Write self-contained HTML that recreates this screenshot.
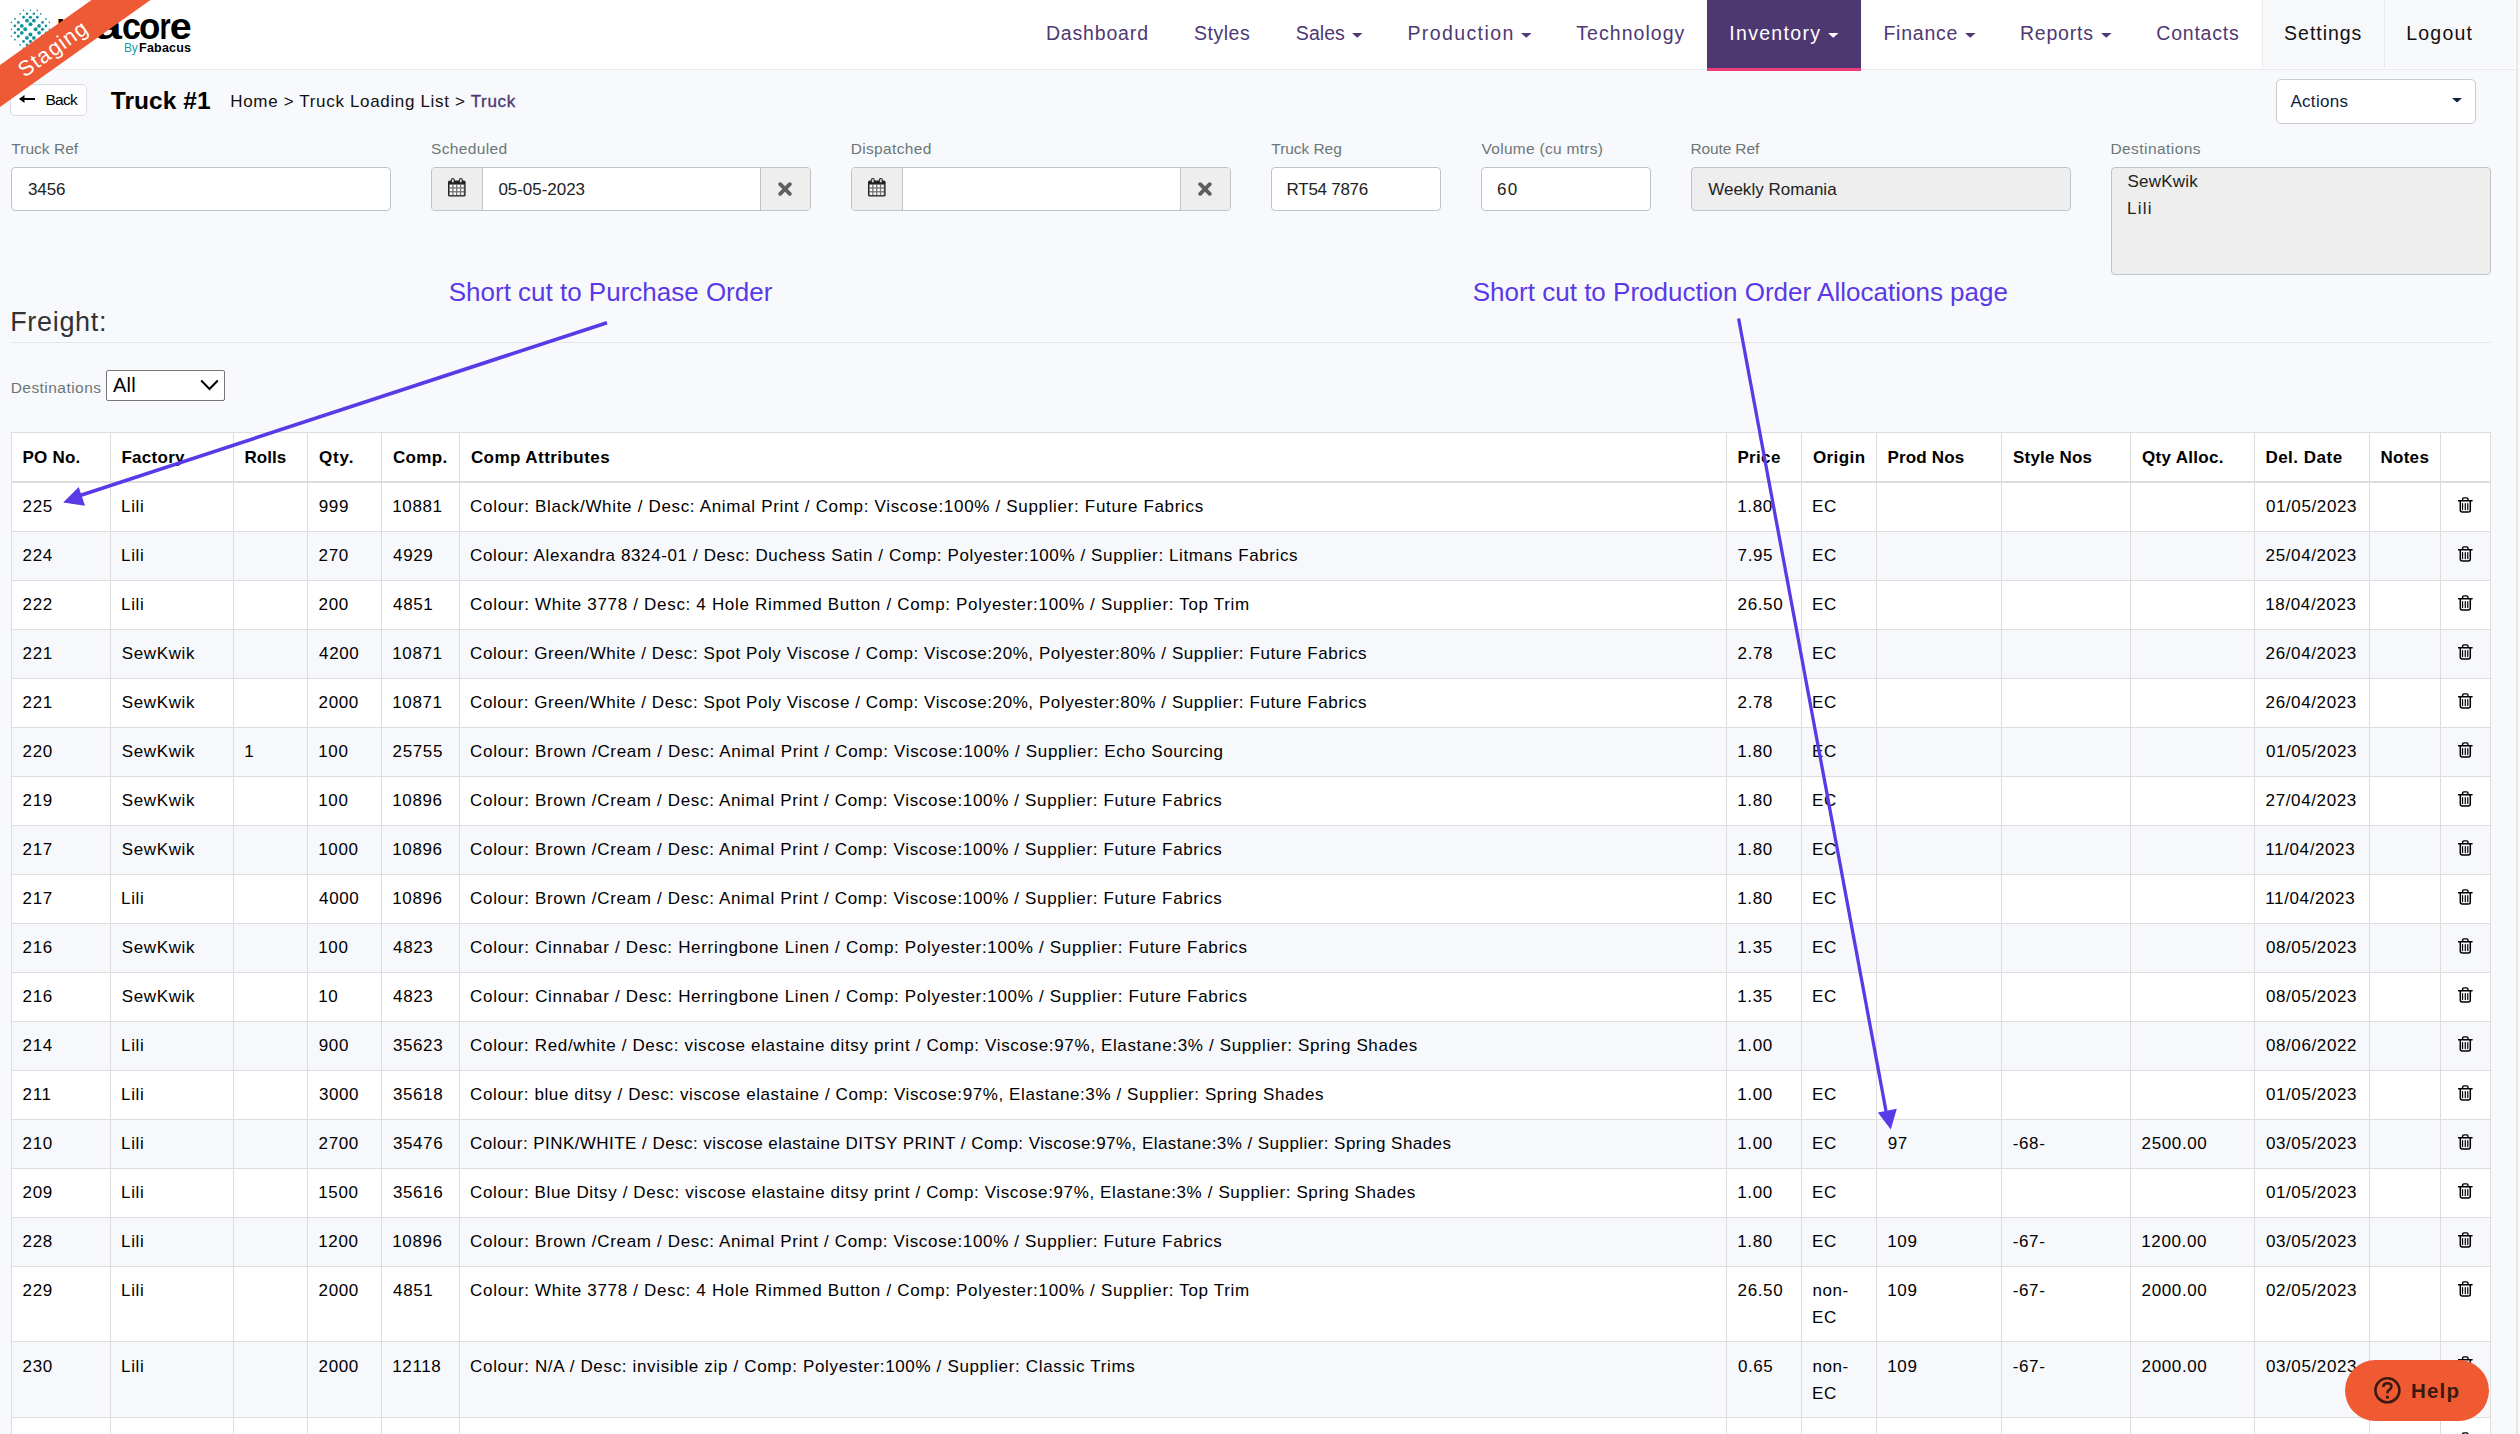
<!DOCTYPE html>
<html><head><meta charset="utf-8"><title>Truck #1</title>
<style>
html,body{margin:0;padding:0;}
body{width:2520px;height:1434px;overflow:hidden;position:relative;background:#f8f9fc;font-family:"Liberation Sans",sans-serif;}
.t{position:absolute;white-space:nowrap;}
.r{position:absolute;}
</style></head><body>
<div class="r" style="left:0px;top:0px;width:2516px;height:69px;background:#ffffff;"></div>
<div class="r" style="left:0px;top:69px;width:2516px;height:1px;background:#e9eaec;"></div>
<div class="r" style="left:2262px;top:0px;width:253px;height:68px;background:#f7f8fa;"></div>
<div class="r" style="left:2262px;top:0px;width:1px;height:68px;background:#ebecef;"></div>
<div class="r" style="left:2384px;top:0px;width:1px;height:68px;background:#e8e9ec;"></div>
<div class="r" style="left:1707px;top:0px;width:154px;height:68px;background:#4e3872;"></div>
<div class="r" style="left:1707px;top:68px;width:154px;height:3px;background:#ef3d7a;"></div>
<div class="t" style="left:1045.88px;top:21.24px;font-size:19.5px;line-height:24px;color:#4e3872;letter-spacing:0.838px;">Dashboard</div>
<div class="t" style="left:1194.12px;top:21.24px;font-size:19.5px;line-height:24px;color:#4e3872;letter-spacing:0.500px;">Styles</div>
<div class="t" style="left:1295.83px;top:21.24px;font-size:19.5px;line-height:24px;color:#4e3872;letter-spacing:0.044px;">Sales</div>
<svg class="r" style="left:1352px;top:33.3px" width="10.5" height="4.8" viewBox="0 0 10.5 4.8"><path d="M0 0H10.5L5.25 4.8Z" fill="#4e3872"/></svg>
<div class="t" style="left:1407.38px;top:21.24px;font-size:19.5px;line-height:24px;color:#4e3872;letter-spacing:1.403px;">Production</div>
<svg class="r" style="left:1521px;top:33.3px" width="10.5" height="4.8" viewBox="0 0 10.5 4.8"><path d="M0 0H10.5L5.25 4.8Z" fill="#4e3872"/></svg>
<div class="t" style="left:1576.33px;top:21.24px;font-size:19.5px;line-height:24px;color:#4e3872;letter-spacing:1.039px;">Technology</div>
<div class="t" style="left:1883.38px;top:21.24px;font-size:19.5px;line-height:24px;color:#4e3872;letter-spacing:0.771px;">Finance</div>
<svg class="r" style="left:1965px;top:33.3px" width="10.5" height="4.8" viewBox="0 0 10.5 4.8"><path d="M0 0H10.5L5.25 4.8Z" fill="#4e3872"/></svg>
<div class="t" style="left:2019.97px;top:21.24px;font-size:19.5px;line-height:24px;color:#4e3872;letter-spacing:0.787px;">Reports</div>
<svg class="r" style="left:2101px;top:33.3px" width="10.5" height="4.8" viewBox="0 0 10.5 4.8"><path d="M0 0H10.5L5.25 4.8Z" fill="#4e3872"/></svg>
<div class="t" style="left:2156.30px;top:21.24px;font-size:19.5px;line-height:24px;color:#4e3872;letter-spacing:0.779px;">Contacts</div>
<div class="t" style="left:1729.25px;top:21.24px;font-size:19.5px;line-height:24px;color:#ffffff;letter-spacing:1.312px;">Inventory</div>
<svg class="r" style="left:1828px;top:33.3px" width="10.5" height="4.8" viewBox="0 0 10.5 4.8"><path d="M0 0H10.5L5.25 4.8Z" fill="#ffffff"/></svg>
<div class="t" style="left:2284.12px;top:21.24px;font-size:19.5px;line-height:24px;color:#111;letter-spacing:0.961px;">Settings</div>
<div class="t" style="left:2406.18px;top:21.24px;font-size:19.5px;line-height:24px;color:#111;letter-spacing:1.225px;">Logout</div>
<div class="r" style="left:2516px;top:0px;width:4px;height:1434px;background:#fafafa;"></div>
<div class="r" style="left:2516px;top:0px;width:2px;height:1434px;background:#e8e8e8;"></div>
<div class="r" style="left:10px;top:84px;width:77px;height:32px;background:#ffffff;border:1px solid #d9dce1;border-radius:5px;box-sizing:border-box;"></div>
<svg class="r" style="left:18.8px;top:94.8px" width="16" height="8" viewBox="0 0 16 8"><path d="M16 4H3.5" stroke="#000" stroke-width="2"/><path d="M0 4L5.5 0V8Z" fill="#000"/></svg>
<div class="t" style="left:45.45px;top:90.13px;font-size:15.5px;line-height:19px;color:#000;letter-spacing:-0.717px;">Back</div>
<div class="t" style="left:110.75px;top:84.91px;font-size:24.5px;line-height:31px;color:#000;font-weight:bold;letter-spacing:0.071px;">Truck #1</div>
<div class="t" style="left:230.32px;top:91.01px;font-size:17px;line-height:21px;color:#111;letter-spacing:0.664px;">Home &gt; Truck Loading List &gt; <span style="color:#4e3872;-webkit-text-stroke:0.35px #4e3872">Truck</span></div>
<div class="r" style="left:2276px;top:79px;width:200px;height:45px;background:#ffffff;border:1px solid #c9cbce;border-radius:5px;box-sizing:border-box;"></div>
<div class="t" style="left:2290.40px;top:90.51px;font-size:17px;line-height:21px;color:#10223f;letter-spacing:0.312px;">Actions</div>
<svg class="r" style="left:2452px;top:98.3px" width="10" height="4.6" viewBox="0 0 10 4.6"><path d="M0 0H10L5.0 4.6Z" fill="#10223f"/></svg>
<div class="t" style="left:11.32px;top:139.13px;font-size:15.5px;line-height:19px;color:#6b7776;letter-spacing:0.031px;">Truck Ref</div>
<div class="t" style="left:430.95px;top:139.13px;font-size:15.5px;line-height:19px;color:#6b7776;letter-spacing:0.363px;">Scheduled</div>
<div class="t" style="left:850.65px;top:139.13px;font-size:15.5px;line-height:19px;color:#6b7776;letter-spacing:0.361px;">Dispatched</div>
<div class="t" style="left:1271.33px;top:139.13px;font-size:15.5px;line-height:19px;color:#6b7776;letter-spacing:-0.062px;">Truck Reg</div>
<div class="t" style="left:1481.47px;top:139.13px;font-size:15.5px;line-height:19px;color:#6b7776;letter-spacing:0.292px;">Volume (cu mtrs)</div>
<div class="t" style="left:1690.45px;top:139.13px;font-size:15.5px;line-height:19px;color:#6b7776;letter-spacing:-0.128px;">Route Ref</div>
<div class="t" style="left:2110.45px;top:139.13px;font-size:15.5px;line-height:19px;color:#6b7776;letter-spacing:0.436px;">Destinations</div>
<div class="r" style="left:11px;top:167px;width:380px;height:44px;background:#fff;border:1px solid #bcc5c8;border-radius:4px;box-sizing:border-box;"></div>
<div class="t" style="left:28.07px;top:178.91px;font-size:17px;line-height:21px;color:#222;letter-spacing:-0.167px;">3456</div>
<div class="r" style="left:431px;top:167px;width:380px;height:44px;background:#fff;border:1px solid #bcc5c8;border-radius:4px;box-sizing:border-box;"></div>
<div class="r" style="left:432px;top:168px;width:50px;height:42px;background:#eeeeee;border-radius:3px 0 0 3px;"></div>
<div class="r" style="left:482px;top:168px;width:1px;height:42px;background:#bcc5c8;"></div>
<div class="r" style="left:761px;top:168px;width:49px;height:42px;background:#eeeeee;border-radius:0 3px 3px 0;"></div>
<div class="r" style="left:760px;top:168px;width:1px;height:42px;background:#bcc5c8;"></div>
<svg class="r" style="left:448px;top:178px" width="18" height="19" viewBox="0 0 18 19"><rect x="0" y="2.6" width="17.6" height="16" rx="1.7" fill="#222"/><rect x="1.2" y="6.2" width="15.2" height="11.2" fill="#777"/><rect x="2.8" y="0" width="4" height="5.2" rx="2" fill="#222"/><rect x="3.8" y="0.9" width="2" height="3.6" rx="1" fill="#ccc"/><rect x="10.8" y="0" width="4" height="5.2" rx="2" fill="#222"/><rect x="11.8" y="0.9" width="2" height="3.6" rx="1" fill="#ccc"/><rect x="1.74" y="6.80" width="2.44" height="2.44" fill="#fff"/><rect x="5.57" y="6.80" width="2.44" height="2.44" fill="#fff"/><rect x="9.40" y="6.80" width="2.44" height="2.44" fill="#fff"/><rect x="13.23" y="6.80" width="2.44" height="2.44" fill="#fff"/><rect x="1.74" y="10.63" width="2.44" height="2.44" fill="#fff"/><rect x="5.57" y="10.63" width="2.44" height="2.44" fill="#fff"/><rect x="9.40" y="10.63" width="2.44" height="2.44" fill="#fff"/><rect x="13.23" y="10.63" width="2.44" height="2.44" fill="#fff"/><rect x="1.74" y="14.46" width="2.44" height="2.44" fill="#fff"/><rect x="5.57" y="14.46" width="2.44" height="2.44" fill="#fff"/><rect x="9.40" y="14.46" width="2.44" height="2.44" fill="#fff"/><rect x="13.23" y="14.46" width="2.44" height="2.44" fill="#fff"/></svg>
<svg class="r" style="left:778px;top:182px" width="14" height="14" viewBox="0 0 14 14"><path d="M2.2 2.2L11.8 11.8M11.8 2.2L2.2 11.8" stroke="#5f5f5f" stroke-width="3.8" stroke-linecap="round"/></svg>
<div class="t" style="left:498.38px;top:178.91px;font-size:17px;line-height:21px;color:#222;letter-spacing:-0.036px;">05-05-2023</div>
<div class="r" style="left:851px;top:167px;width:380px;height:44px;background:#fff;border:1px solid #bcc5c8;border-radius:4px;box-sizing:border-box;"></div>
<div class="r" style="left:852px;top:168px;width:50px;height:42px;background:#eeeeee;border-radius:3px 0 0 3px;"></div>
<div class="r" style="left:902px;top:168px;width:1px;height:42px;background:#bcc5c8;"></div>
<div class="r" style="left:1181px;top:168px;width:49px;height:42px;background:#eeeeee;border-radius:0 3px 3px 0;"></div>
<div class="r" style="left:1180px;top:168px;width:1px;height:42px;background:#bcc5c8;"></div>
<svg class="r" style="left:868px;top:178px" width="18" height="19" viewBox="0 0 18 19"><rect x="0" y="2.6" width="17.6" height="16" rx="1.7" fill="#222"/><rect x="1.2" y="6.2" width="15.2" height="11.2" fill="#777"/><rect x="2.8" y="0" width="4" height="5.2" rx="2" fill="#222"/><rect x="3.8" y="0.9" width="2" height="3.6" rx="1" fill="#ccc"/><rect x="10.8" y="0" width="4" height="5.2" rx="2" fill="#222"/><rect x="11.8" y="0.9" width="2" height="3.6" rx="1" fill="#ccc"/><rect x="1.74" y="6.80" width="2.44" height="2.44" fill="#fff"/><rect x="5.57" y="6.80" width="2.44" height="2.44" fill="#fff"/><rect x="9.40" y="6.80" width="2.44" height="2.44" fill="#fff"/><rect x="13.23" y="6.80" width="2.44" height="2.44" fill="#fff"/><rect x="1.74" y="10.63" width="2.44" height="2.44" fill="#fff"/><rect x="5.57" y="10.63" width="2.44" height="2.44" fill="#fff"/><rect x="9.40" y="10.63" width="2.44" height="2.44" fill="#fff"/><rect x="13.23" y="10.63" width="2.44" height="2.44" fill="#fff"/><rect x="1.74" y="14.46" width="2.44" height="2.44" fill="#fff"/><rect x="5.57" y="14.46" width="2.44" height="2.44" fill="#fff"/><rect x="9.40" y="14.46" width="2.44" height="2.44" fill="#fff"/><rect x="13.23" y="14.46" width="2.44" height="2.44" fill="#fff"/></svg>
<svg class="r" style="left:1198px;top:182px" width="14" height="14" viewBox="0 0 14 14"><path d="M2.2 2.2L11.8 11.8M11.8 2.2L2.2 11.8" stroke="#5f5f5f" stroke-width="3.8" stroke-linecap="round"/></svg>
<div class="r" style="left:1271px;top:167px;width:170px;height:44px;background:#fff;border:1px solid #bcc5c8;border-radius:4px;box-sizing:border-box;"></div>
<div class="t" style="left:1286.62px;top:178.91px;font-size:17px;line-height:21px;color:#222;letter-spacing:-0.269px;">RT54 7876</div>
<div class="r" style="left:1481px;top:167px;width:170px;height:44px;background:#fff;border:1px solid #bcc5c8;border-radius:4px;box-sizing:border-box;"></div>
<div class="t" style="left:1497.12px;top:178.91px;font-size:17px;line-height:21px;color:#222;letter-spacing:1.125px;">60</div>
<div class="r" style="left:1691px;top:167px;width:380px;height:44px;background:#eeeeee;border:1px solid #bcc5c8;border-radius:4px;box-sizing:border-box;"></div>
<div class="t" style="left:1708.17px;top:178.91px;font-size:17px;line-height:21px;color:#222;letter-spacing:0.021px;">Weekly Romania</div>
<div class="r" style="left:2111px;top:167px;width:380px;height:108px;background:#eeeeee;border:1px solid #bcc5c8;border-radius:4px;box-sizing:border-box;"></div>
<div class="t" style="left:2127.55px;top:170.91px;font-size:17px;line-height:21px;color:#222;letter-spacing:0.192px;">SewKwik</div>
<div class="t" style="left:2126.93px;top:197.91px;font-size:17px;line-height:21px;color:#222;letter-spacing:1.250px;">Lili</div>
<div class="t" style="left:10.15px;top:304.54px;font-size:27px;line-height:34px;color:#333;letter-spacing:0.693px;">Freight:</div>
<div class="r" style="left:11px;top:342px;width:2480px;height:1px;background:#e4e5e8;"></div>
<div class="t" style="left:10.65px;top:378.03px;font-size:15.5px;line-height:19px;color:#6b7776;letter-spacing:0.464px;">Destinations</div>
<div class="r" style="left:106px;top:370px;width:119px;height:31px;background:#ffffff;border:1px solid #767676;border-radius:2px;box-sizing:border-box;"></div>
<div class="t" style="left:112.90px;top:373.47px;font-size:20px;line-height:25px;color:#000;letter-spacing:0.262px;">All</div>
<svg class="r" style="left:199.5px;top:379px" width="19" height="12" viewBox="0 0 19 12"><path d="M1.2 1.5L9.5 10L17.8 1.5" stroke="#000" stroke-width="2" fill="none"/></svg>
<div class="r" style="left:11px;top:432px;width:2480px;height:51px;background:#ffffff;"></div>
<div class="r" style="left:11px;top:483px;width:2480px;height:49px;background:#ffffff;"></div>
<div class="r" style="left:11px;top:532px;width:2480px;height:49px;background:#f7f8fc;"></div>
<div class="r" style="left:11px;top:581px;width:2480px;height:49px;background:#ffffff;"></div>
<div class="r" style="left:11px;top:630px;width:2480px;height:49px;background:#f7f8fc;"></div>
<div class="r" style="left:11px;top:679px;width:2480px;height:49px;background:#ffffff;"></div>
<div class="r" style="left:11px;top:728px;width:2480px;height:49px;background:#f7f8fc;"></div>
<div class="r" style="left:11px;top:777px;width:2480px;height:49px;background:#ffffff;"></div>
<div class="r" style="left:11px;top:826px;width:2480px;height:49px;background:#f7f8fc;"></div>
<div class="r" style="left:11px;top:875px;width:2480px;height:49px;background:#ffffff;"></div>
<div class="r" style="left:11px;top:924px;width:2480px;height:49px;background:#f7f8fc;"></div>
<div class="r" style="left:11px;top:973px;width:2480px;height:49px;background:#ffffff;"></div>
<div class="r" style="left:11px;top:1022px;width:2480px;height:49px;background:#f7f8fc;"></div>
<div class="r" style="left:11px;top:1071px;width:2480px;height:49px;background:#ffffff;"></div>
<div class="r" style="left:11px;top:1120px;width:2480px;height:49px;background:#f7f8fc;"></div>
<div class="r" style="left:11px;top:1169px;width:2480px;height:49px;background:#ffffff;"></div>
<div class="r" style="left:11px;top:1218px;width:2480px;height:49px;background:#f7f8fc;"></div>
<div class="r" style="left:11px;top:1267px;width:2480px;height:75px;background:#ffffff;"></div>
<div class="r" style="left:11px;top:1342px;width:2480px;height:76px;background:#f7f8fc;"></div>
<div class="r" style="left:11px;top:1418px;width:2480px;height:16px;background:#ffffff;"></div>
<div class="r" style="left:11px;top:432px;width:2480px;height:1px;background:#dddddd;"></div>
<div class="r" style="left:11px;top:481px;width:2480px;height:2px;background:#dddddd;"></div>
<div class="r" style="left:11px;top:531px;width:2480px;height:1px;background:#dddddd;"></div>
<div class="r" style="left:11px;top:580px;width:2480px;height:1px;background:#dddddd;"></div>
<div class="r" style="left:11px;top:629px;width:2480px;height:1px;background:#dddddd;"></div>
<div class="r" style="left:11px;top:678px;width:2480px;height:1px;background:#dddddd;"></div>
<div class="r" style="left:11px;top:727px;width:2480px;height:1px;background:#dddddd;"></div>
<div class="r" style="left:11px;top:776px;width:2480px;height:1px;background:#dddddd;"></div>
<div class="r" style="left:11px;top:825px;width:2480px;height:1px;background:#dddddd;"></div>
<div class="r" style="left:11px;top:874px;width:2480px;height:1px;background:#dddddd;"></div>
<div class="r" style="left:11px;top:923px;width:2480px;height:1px;background:#dddddd;"></div>
<div class="r" style="left:11px;top:972px;width:2480px;height:1px;background:#dddddd;"></div>
<div class="r" style="left:11px;top:1021px;width:2480px;height:1px;background:#dddddd;"></div>
<div class="r" style="left:11px;top:1070px;width:2480px;height:1px;background:#dddddd;"></div>
<div class="r" style="left:11px;top:1119px;width:2480px;height:1px;background:#dddddd;"></div>
<div class="r" style="left:11px;top:1168px;width:2480px;height:1px;background:#dddddd;"></div>
<div class="r" style="left:11px;top:1217px;width:2480px;height:1px;background:#dddddd;"></div>
<div class="r" style="left:11px;top:1266px;width:2480px;height:1px;background:#dddddd;"></div>
<div class="r" style="left:11px;top:1341px;width:2480px;height:1px;background:#dddddd;"></div>
<div class="r" style="left:11px;top:1417px;width:2480px;height:1px;background:#dddddd;"></div>
<div class="r" style="left:11px;top:1466px;width:2480px;height:1px;background:#dddddd;"></div>
<div class="r" style="left:11px;top:432px;width:1px;height:1002px;background:#dddddd;"></div>
<div class="r" style="left:110px;top:432px;width:1px;height:1002px;background:#dddddd;"></div>
<div class="r" style="left:233px;top:432px;width:1px;height:1002px;background:#dddddd;"></div>
<div class="r" style="left:307px;top:432px;width:1px;height:1002px;background:#dddddd;"></div>
<div class="r" style="left:381px;top:432px;width:1px;height:1002px;background:#dddddd;"></div>
<div class="r" style="left:459px;top:432px;width:1px;height:1002px;background:#dddddd;"></div>
<div class="r" style="left:1726px;top:432px;width:1px;height:1002px;background:#dddddd;"></div>
<div class="r" style="left:1801px;top:432px;width:1px;height:1002px;background:#dddddd;"></div>
<div class="r" style="left:1876px;top:432px;width:1px;height:1002px;background:#dddddd;"></div>
<div class="r" style="left:2001px;top:432px;width:1px;height:1002px;background:#dddddd;"></div>
<div class="r" style="left:2130px;top:432px;width:1px;height:1002px;background:#dddddd;"></div>
<div class="r" style="left:2254px;top:432px;width:1px;height:1002px;background:#dddddd;"></div>
<div class="r" style="left:2369px;top:432px;width:1px;height:1002px;background:#dddddd;"></div>
<div class="r" style="left:2440px;top:432px;width:1px;height:1002px;background:#dddddd;"></div>
<div class="r" style="left:2490px;top:432px;width:1px;height:1002px;background:#dddddd;"></div>
<div class="t" style="left:22.38px;top:446.61px;font-size:17px;line-height:21px;color:#000;font-weight:bold;letter-spacing:0.240px;">PO No.</div>
<div class="t" style="left:121.38px;top:446.61px;font-size:17px;line-height:21px;color:#000;font-weight:bold;letter-spacing:0.292px;">Factory</div>
<div class="t" style="left:244.38px;top:446.61px;font-size:17px;line-height:21px;color:#000;font-weight:bold;letter-spacing:0.062px;">Rolls</div>
<div class="t" style="left:318.88px;top:446.61px;font-size:17px;line-height:21px;color:#000;font-weight:bold;letter-spacing:0.892px;">Qty.</div>
<div class="t" style="left:392.88px;top:446.61px;font-size:17px;line-height:21px;color:#000;font-weight:bold;letter-spacing:0.344px;">Comp.</div>
<div class="t" style="left:470.88px;top:446.61px;font-size:17px;line-height:21px;color:#000;font-weight:bold;letter-spacing:0.446px;">Comp Attributes</div>
<div class="t" style="left:1737.38px;top:446.61px;font-size:17px;line-height:21px;color:#000;font-weight:bold;letter-spacing:0.356px;">Price</div>
<div class="t" style="left:1812.88px;top:446.61px;font-size:17px;line-height:21px;color:#000;font-weight:bold;letter-spacing:0.425px;">Origin</div>
<div class="t" style="left:1887.38px;top:446.61px;font-size:17px;line-height:21px;color:#000;font-weight:bold;letter-spacing:0.179px;">Prod Nos</div>
<div class="t" style="left:2013.00px;top:446.61px;font-size:17px;line-height:21px;color:#000;font-weight:bold;letter-spacing:0.194px;">Style Nos</div>
<div class="t" style="left:2141.88px;top:446.61px;font-size:17px;line-height:21px;color:#000;font-weight:bold;letter-spacing:0.333px;">Qty Alloc.</div>
<div class="t" style="left:2265.38px;top:446.61px;font-size:17px;line-height:21px;color:#000;font-weight:bold;letter-spacing:0.500px;">Del. Date</div>
<div class="t" style="left:2380.38px;top:446.61px;font-size:17px;line-height:21px;color:#000;font-weight:bold;letter-spacing:0.306px;">Notes</div>
<div class="t" style="left:22.62px;top:495.91px;font-size:17px;line-height:21px;color:#000;letter-spacing:0.620px;">225</div>
<div class="t" style="left:121.12px;top:495.91px;font-size:17px;line-height:21px;color:#000;letter-spacing:0.620px;">Lili</div>
<div class="t" style="left:318.75px;top:495.91px;font-size:17px;line-height:21px;color:#000;letter-spacing:0.620px;">999</div>
<div class="t" style="left:392.25px;top:495.91px;font-size:17px;line-height:21px;color:#000;letter-spacing:0.620px;">10881</div>
<div class="t" style="left:470.12px;top:495.91px;font-size:17px;line-height:21px;color:#000;letter-spacing:0.676px;">Colour: Black/White / Desc: Animal Print / Comp: Viscose:100% / Supplier: Future Fabrics</div>
<div class="t" style="left:1737.25px;top:495.91px;font-size:17px;line-height:21px;color:#000;letter-spacing:0.620px;">1.80</div>
<div class="t" style="left:1812.12px;top:495.91px;font-size:17px;line-height:21px;color:#000;letter-spacing:0.620px;">EC</div>
<div class="t" style="left:2265.88px;top:495.91px;font-size:17px;line-height:21px;color:#000;letter-spacing:0.620px;">01/05/2023</div>
<svg class="r" style="left:2457.8px;top:497px" width="15" height="17" viewBox="0 0 15 17"><path d="M0.6 3.7H14" stroke="#000" stroke-width="1.6" stroke-linecap="round"/><path d="M4.6 3.4V2.2Q4.6 0.9 5.9 0.9H8.7Q10 0.9 10 2.2V3.4" stroke="#000" stroke-width="1.4" fill="none"/><path d="M2.3 4V13Q2.3 15.05 4.3 15.05H10.3Q12.3 15.05 12.3 13V4" stroke="#000" stroke-width="1.5" fill="none"/><path d="M4.56 6.5V12.6M7.28 6.5V12.6M9.8 6.5V12.6" stroke="#000" stroke-width="1.2" stroke-linecap="round"/></svg>
<div class="t" style="left:22.62px;top:544.91px;font-size:17px;line-height:21px;color:#000;letter-spacing:0.620px;">224</div>
<div class="t" style="left:121.12px;top:544.91px;font-size:17px;line-height:21px;color:#000;letter-spacing:0.620px;">Lili</div>
<div class="t" style="left:318.62px;top:544.91px;font-size:17px;line-height:21px;color:#000;letter-spacing:0.620px;">270</div>
<div class="t" style="left:393.12px;top:544.91px;font-size:17px;line-height:21px;color:#000;letter-spacing:0.620px;">4929</div>
<div class="t" style="left:470.12px;top:544.91px;font-size:17px;line-height:21px;color:#000;letter-spacing:0.611px;">Colour: Alexandra 8324-01 / Desc: Duchess Satin / Comp: Polyester:100% / Supplier: Litmans Fabrics</div>
<div class="t" style="left:1737.62px;top:544.91px;font-size:17px;line-height:21px;color:#000;letter-spacing:0.620px;">7.95</div>
<div class="t" style="left:1812.12px;top:544.91px;font-size:17px;line-height:21px;color:#000;letter-spacing:0.620px;">EC</div>
<div class="t" style="left:2265.62px;top:544.91px;font-size:17px;line-height:21px;color:#000;letter-spacing:0.620px;">25/04/2023</div>
<svg class="r" style="left:2457.8px;top:546px" width="15" height="17" viewBox="0 0 15 17"><path d="M0.6 3.7H14" stroke="#000" stroke-width="1.6" stroke-linecap="round"/><path d="M4.6 3.4V2.2Q4.6 0.9 5.9 0.9H8.7Q10 0.9 10 2.2V3.4" stroke="#000" stroke-width="1.4" fill="none"/><path d="M2.3 4V13Q2.3 15.05 4.3 15.05H10.3Q12.3 15.05 12.3 13V4" stroke="#000" stroke-width="1.5" fill="none"/><path d="M4.56 6.5V12.6M7.28 6.5V12.6M9.8 6.5V12.6" stroke="#000" stroke-width="1.2" stroke-linecap="round"/></svg>
<div class="t" style="left:22.62px;top:593.91px;font-size:17px;line-height:21px;color:#000;letter-spacing:0.620px;">222</div>
<div class="t" style="left:121.12px;top:593.91px;font-size:17px;line-height:21px;color:#000;letter-spacing:0.620px;">Lili</div>
<div class="t" style="left:318.62px;top:593.91px;font-size:17px;line-height:21px;color:#000;letter-spacing:0.620px;">200</div>
<div class="t" style="left:393.12px;top:593.91px;font-size:17px;line-height:21px;color:#000;letter-spacing:0.620px;">4851</div>
<div class="t" style="left:470.12px;top:593.91px;font-size:17px;line-height:21px;color:#000;letter-spacing:0.681px;">Colour: White 3778 / Desc: 4 Hole Rimmed Button / Comp: Polyester:100% / Supplier: Top Trim</div>
<div class="t" style="left:1737.62px;top:593.91px;font-size:17px;line-height:21px;color:#000;letter-spacing:0.620px;">26.50</div>
<div class="t" style="left:1812.12px;top:593.91px;font-size:17px;line-height:21px;color:#000;letter-spacing:0.620px;">EC</div>
<div class="t" style="left:2265.25px;top:593.91px;font-size:17px;line-height:21px;color:#000;letter-spacing:0.620px;">18/04/2023</div>
<svg class="r" style="left:2457.8px;top:595px" width="15" height="17" viewBox="0 0 15 17"><path d="M0.6 3.7H14" stroke="#000" stroke-width="1.6" stroke-linecap="round"/><path d="M4.6 3.4V2.2Q4.6 0.9 5.9 0.9H8.7Q10 0.9 10 2.2V3.4" stroke="#000" stroke-width="1.4" fill="none"/><path d="M2.3 4V13Q2.3 15.05 4.3 15.05H10.3Q12.3 15.05 12.3 13V4" stroke="#000" stroke-width="1.5" fill="none"/><path d="M4.56 6.5V12.6M7.28 6.5V12.6M9.8 6.5V12.6" stroke="#000" stroke-width="1.2" stroke-linecap="round"/></svg>
<div class="t" style="left:22.62px;top:642.91px;font-size:17px;line-height:21px;color:#000;letter-spacing:0.620px;">221</div>
<div class="t" style="left:121.75px;top:642.91px;font-size:17px;line-height:21px;color:#000;letter-spacing:0.620px;">SewKwik</div>
<div class="t" style="left:319.12px;top:642.91px;font-size:17px;line-height:21px;color:#000;letter-spacing:0.620px;">4200</div>
<div class="t" style="left:392.25px;top:642.91px;font-size:17px;line-height:21px;color:#000;letter-spacing:0.620px;">10871</div>
<div class="t" style="left:470.12px;top:642.91px;font-size:17px;line-height:21px;color:#000;letter-spacing:0.574px;">Colour: Green/White / Desc: Spot Poly Viscose / Comp: Viscose:20%, Polyester:80% / Supplier: Future Fabrics</div>
<div class="t" style="left:1737.62px;top:642.91px;font-size:17px;line-height:21px;color:#000;letter-spacing:0.620px;">2.78</div>
<div class="t" style="left:1812.12px;top:642.91px;font-size:17px;line-height:21px;color:#000;letter-spacing:0.620px;">EC</div>
<div class="t" style="left:2265.62px;top:642.91px;font-size:17px;line-height:21px;color:#000;letter-spacing:0.620px;">26/04/2023</div>
<svg class="r" style="left:2457.8px;top:644px" width="15" height="17" viewBox="0 0 15 17"><path d="M0.6 3.7H14" stroke="#000" stroke-width="1.6" stroke-linecap="round"/><path d="M4.6 3.4V2.2Q4.6 0.9 5.9 0.9H8.7Q10 0.9 10 2.2V3.4" stroke="#000" stroke-width="1.4" fill="none"/><path d="M2.3 4V13Q2.3 15.05 4.3 15.05H10.3Q12.3 15.05 12.3 13V4" stroke="#000" stroke-width="1.5" fill="none"/><path d="M4.56 6.5V12.6M7.28 6.5V12.6M9.8 6.5V12.6" stroke="#000" stroke-width="1.2" stroke-linecap="round"/></svg>
<div class="t" style="left:22.62px;top:691.91px;font-size:17px;line-height:21px;color:#000;letter-spacing:0.620px;">221</div>
<div class="t" style="left:121.75px;top:691.91px;font-size:17px;line-height:21px;color:#000;letter-spacing:0.620px;">SewKwik</div>
<div class="t" style="left:318.62px;top:691.91px;font-size:17px;line-height:21px;color:#000;letter-spacing:0.620px;">2000</div>
<div class="t" style="left:392.25px;top:691.91px;font-size:17px;line-height:21px;color:#000;letter-spacing:0.620px;">10871</div>
<div class="t" style="left:470.12px;top:691.91px;font-size:17px;line-height:21px;color:#000;letter-spacing:0.574px;">Colour: Green/White / Desc: Spot Poly Viscose / Comp: Viscose:20%, Polyester:80% / Supplier: Future Fabrics</div>
<div class="t" style="left:1737.62px;top:691.91px;font-size:17px;line-height:21px;color:#000;letter-spacing:0.620px;">2.78</div>
<div class="t" style="left:1812.12px;top:691.91px;font-size:17px;line-height:21px;color:#000;letter-spacing:0.620px;">EC</div>
<div class="t" style="left:2265.62px;top:691.91px;font-size:17px;line-height:21px;color:#000;letter-spacing:0.620px;">26/04/2023</div>
<svg class="r" style="left:2457.8px;top:693px" width="15" height="17" viewBox="0 0 15 17"><path d="M0.6 3.7H14" stroke="#000" stroke-width="1.6" stroke-linecap="round"/><path d="M4.6 3.4V2.2Q4.6 0.9 5.9 0.9H8.7Q10 0.9 10 2.2V3.4" stroke="#000" stroke-width="1.4" fill="none"/><path d="M2.3 4V13Q2.3 15.05 4.3 15.05H10.3Q12.3 15.05 12.3 13V4" stroke="#000" stroke-width="1.5" fill="none"/><path d="M4.56 6.5V12.6M7.28 6.5V12.6M9.8 6.5V12.6" stroke="#000" stroke-width="1.2" stroke-linecap="round"/></svg>
<div class="t" style="left:22.62px;top:740.91px;font-size:17px;line-height:21px;color:#000;letter-spacing:0.620px;">220</div>
<div class="t" style="left:121.75px;top:740.91px;font-size:17px;line-height:21px;color:#000;letter-spacing:0.620px;">SewKwik</div>
<div class="t" style="left:244.25px;top:740.91px;font-size:17px;line-height:21px;color:#000;letter-spacing:0.620px;">1</div>
<div class="t" style="left:318.25px;top:740.91px;font-size:17px;line-height:21px;color:#000;letter-spacing:0.620px;">100</div>
<div class="t" style="left:392.62px;top:740.91px;font-size:17px;line-height:21px;color:#000;letter-spacing:0.620px;">25755</div>
<div class="t" style="left:470.12px;top:740.91px;font-size:17px;line-height:21px;color:#000;letter-spacing:0.675px;">Colour: Brown /Cream / Desc: Animal Print / Comp: Viscose:100% / Supplier: Echo Sourcing</div>
<div class="t" style="left:1737.25px;top:740.91px;font-size:17px;line-height:21px;color:#000;letter-spacing:0.620px;">1.80</div>
<div class="t" style="left:1812.12px;top:740.91px;font-size:17px;line-height:21px;color:#000;letter-spacing:0.620px;">EC</div>
<div class="t" style="left:2265.88px;top:740.91px;font-size:17px;line-height:21px;color:#000;letter-spacing:0.620px;">01/05/2023</div>
<svg class="r" style="left:2457.8px;top:742px" width="15" height="17" viewBox="0 0 15 17"><path d="M0.6 3.7H14" stroke="#000" stroke-width="1.6" stroke-linecap="round"/><path d="M4.6 3.4V2.2Q4.6 0.9 5.9 0.9H8.7Q10 0.9 10 2.2V3.4" stroke="#000" stroke-width="1.4" fill="none"/><path d="M2.3 4V13Q2.3 15.05 4.3 15.05H10.3Q12.3 15.05 12.3 13V4" stroke="#000" stroke-width="1.5" fill="none"/><path d="M4.56 6.5V12.6M7.28 6.5V12.6M9.8 6.5V12.6" stroke="#000" stroke-width="1.2" stroke-linecap="round"/></svg>
<div class="t" style="left:22.62px;top:789.91px;font-size:17px;line-height:21px;color:#000;letter-spacing:0.620px;">219</div>
<div class="t" style="left:121.75px;top:789.91px;font-size:17px;line-height:21px;color:#000;letter-spacing:0.620px;">SewKwik</div>
<div class="t" style="left:318.25px;top:789.91px;font-size:17px;line-height:21px;color:#000;letter-spacing:0.620px;">100</div>
<div class="t" style="left:392.25px;top:789.91px;font-size:17px;line-height:21px;color:#000;letter-spacing:0.620px;">10896</div>
<div class="t" style="left:470.12px;top:789.91px;font-size:17px;line-height:21px;color:#000;letter-spacing:0.665px;">Colour: Brown /Cream / Desc: Animal Print / Comp: Viscose:100% / Supplier: Future Fabrics</div>
<div class="t" style="left:1737.25px;top:789.91px;font-size:17px;line-height:21px;color:#000;letter-spacing:0.620px;">1.80</div>
<div class="t" style="left:1812.12px;top:789.91px;font-size:17px;line-height:21px;color:#000;letter-spacing:0.620px;">EC</div>
<div class="t" style="left:2265.62px;top:789.91px;font-size:17px;line-height:21px;color:#000;letter-spacing:0.620px;">27/04/2023</div>
<svg class="r" style="left:2457.8px;top:791px" width="15" height="17" viewBox="0 0 15 17"><path d="M0.6 3.7H14" stroke="#000" stroke-width="1.6" stroke-linecap="round"/><path d="M4.6 3.4V2.2Q4.6 0.9 5.9 0.9H8.7Q10 0.9 10 2.2V3.4" stroke="#000" stroke-width="1.4" fill="none"/><path d="M2.3 4V13Q2.3 15.05 4.3 15.05H10.3Q12.3 15.05 12.3 13V4" stroke="#000" stroke-width="1.5" fill="none"/><path d="M4.56 6.5V12.6M7.28 6.5V12.6M9.8 6.5V12.6" stroke="#000" stroke-width="1.2" stroke-linecap="round"/></svg>
<div class="t" style="left:22.62px;top:838.91px;font-size:17px;line-height:21px;color:#000;letter-spacing:0.620px;">217</div>
<div class="t" style="left:121.75px;top:838.91px;font-size:17px;line-height:21px;color:#000;letter-spacing:0.620px;">SewKwik</div>
<div class="t" style="left:318.25px;top:838.91px;font-size:17px;line-height:21px;color:#000;letter-spacing:0.620px;">1000</div>
<div class="t" style="left:392.25px;top:838.91px;font-size:17px;line-height:21px;color:#000;letter-spacing:0.620px;">10896</div>
<div class="t" style="left:470.12px;top:838.91px;font-size:17px;line-height:21px;color:#000;letter-spacing:0.665px;">Colour: Brown /Cream / Desc: Animal Print / Comp: Viscose:100% / Supplier: Future Fabrics</div>
<div class="t" style="left:1737.25px;top:838.91px;font-size:17px;line-height:21px;color:#000;letter-spacing:0.620px;">1.80</div>
<div class="t" style="left:1812.12px;top:838.91px;font-size:17px;line-height:21px;color:#000;letter-spacing:0.620px;">EC</div>
<div class="t" style="left:2265.25px;top:838.91px;font-size:17px;line-height:21px;color:#000;letter-spacing:0.620px;">11/04/2023</div>
<svg class="r" style="left:2457.8px;top:840px" width="15" height="17" viewBox="0 0 15 17"><path d="M0.6 3.7H14" stroke="#000" stroke-width="1.6" stroke-linecap="round"/><path d="M4.6 3.4V2.2Q4.6 0.9 5.9 0.9H8.7Q10 0.9 10 2.2V3.4" stroke="#000" stroke-width="1.4" fill="none"/><path d="M2.3 4V13Q2.3 15.05 4.3 15.05H10.3Q12.3 15.05 12.3 13V4" stroke="#000" stroke-width="1.5" fill="none"/><path d="M4.56 6.5V12.6M7.28 6.5V12.6M9.8 6.5V12.6" stroke="#000" stroke-width="1.2" stroke-linecap="round"/></svg>
<div class="t" style="left:22.62px;top:887.91px;font-size:17px;line-height:21px;color:#000;letter-spacing:0.620px;">217</div>
<div class="t" style="left:121.12px;top:887.91px;font-size:17px;line-height:21px;color:#000;letter-spacing:0.620px;">Lili</div>
<div class="t" style="left:319.12px;top:887.91px;font-size:17px;line-height:21px;color:#000;letter-spacing:0.620px;">4000</div>
<div class="t" style="left:392.25px;top:887.91px;font-size:17px;line-height:21px;color:#000;letter-spacing:0.620px;">10896</div>
<div class="t" style="left:470.12px;top:887.91px;font-size:17px;line-height:21px;color:#000;letter-spacing:0.665px;">Colour: Brown /Cream / Desc: Animal Print / Comp: Viscose:100% / Supplier: Future Fabrics</div>
<div class="t" style="left:1737.25px;top:887.91px;font-size:17px;line-height:21px;color:#000;letter-spacing:0.620px;">1.80</div>
<div class="t" style="left:1812.12px;top:887.91px;font-size:17px;line-height:21px;color:#000;letter-spacing:0.620px;">EC</div>
<div class="t" style="left:2265.25px;top:887.91px;font-size:17px;line-height:21px;color:#000;letter-spacing:0.620px;">11/04/2023</div>
<svg class="r" style="left:2457.8px;top:889px" width="15" height="17" viewBox="0 0 15 17"><path d="M0.6 3.7H14" stroke="#000" stroke-width="1.6" stroke-linecap="round"/><path d="M4.6 3.4V2.2Q4.6 0.9 5.9 0.9H8.7Q10 0.9 10 2.2V3.4" stroke="#000" stroke-width="1.4" fill="none"/><path d="M2.3 4V13Q2.3 15.05 4.3 15.05H10.3Q12.3 15.05 12.3 13V4" stroke="#000" stroke-width="1.5" fill="none"/><path d="M4.56 6.5V12.6M7.28 6.5V12.6M9.8 6.5V12.6" stroke="#000" stroke-width="1.2" stroke-linecap="round"/></svg>
<div class="t" style="left:22.62px;top:936.91px;font-size:17px;line-height:21px;color:#000;letter-spacing:0.620px;">216</div>
<div class="t" style="left:121.75px;top:936.91px;font-size:17px;line-height:21px;color:#000;letter-spacing:0.620px;">SewKwik</div>
<div class="t" style="left:318.25px;top:936.91px;font-size:17px;line-height:21px;color:#000;letter-spacing:0.620px;">100</div>
<div class="t" style="left:393.12px;top:936.91px;font-size:17px;line-height:21px;color:#000;letter-spacing:0.620px;">4823</div>
<div class="t" style="left:470.12px;top:936.91px;font-size:17px;line-height:21px;color:#000;letter-spacing:0.687px;">Colour: Cinnabar / Desc: Herringbone Linen / Comp: Polyester:100% / Supplier: Future Fabrics</div>
<div class="t" style="left:1737.25px;top:936.91px;font-size:17px;line-height:21px;color:#000;letter-spacing:0.620px;">1.35</div>
<div class="t" style="left:1812.12px;top:936.91px;font-size:17px;line-height:21px;color:#000;letter-spacing:0.620px;">EC</div>
<div class="t" style="left:2265.88px;top:936.91px;font-size:17px;line-height:21px;color:#000;letter-spacing:0.620px;">08/05/2023</div>
<svg class="r" style="left:2457.8px;top:938px" width="15" height="17" viewBox="0 0 15 17"><path d="M0.6 3.7H14" stroke="#000" stroke-width="1.6" stroke-linecap="round"/><path d="M4.6 3.4V2.2Q4.6 0.9 5.9 0.9H8.7Q10 0.9 10 2.2V3.4" stroke="#000" stroke-width="1.4" fill="none"/><path d="M2.3 4V13Q2.3 15.05 4.3 15.05H10.3Q12.3 15.05 12.3 13V4" stroke="#000" stroke-width="1.5" fill="none"/><path d="M4.56 6.5V12.6M7.28 6.5V12.6M9.8 6.5V12.6" stroke="#000" stroke-width="1.2" stroke-linecap="round"/></svg>
<div class="t" style="left:22.62px;top:985.91px;font-size:17px;line-height:21px;color:#000;letter-spacing:0.620px;">216</div>
<div class="t" style="left:121.75px;top:985.91px;font-size:17px;line-height:21px;color:#000;letter-spacing:0.620px;">SewKwik</div>
<div class="t" style="left:318.25px;top:985.91px;font-size:17px;line-height:21px;color:#000;letter-spacing:0.620px;">10</div>
<div class="t" style="left:393.12px;top:985.91px;font-size:17px;line-height:21px;color:#000;letter-spacing:0.620px;">4823</div>
<div class="t" style="left:470.12px;top:985.91px;font-size:17px;line-height:21px;color:#000;letter-spacing:0.687px;">Colour: Cinnabar / Desc: Herringbone Linen / Comp: Polyester:100% / Supplier: Future Fabrics</div>
<div class="t" style="left:1737.25px;top:985.91px;font-size:17px;line-height:21px;color:#000;letter-spacing:0.620px;">1.35</div>
<div class="t" style="left:1812.12px;top:985.91px;font-size:17px;line-height:21px;color:#000;letter-spacing:0.620px;">EC</div>
<div class="t" style="left:2265.88px;top:985.91px;font-size:17px;line-height:21px;color:#000;letter-spacing:0.620px;">08/05/2023</div>
<svg class="r" style="left:2457.8px;top:987px" width="15" height="17" viewBox="0 0 15 17"><path d="M0.6 3.7H14" stroke="#000" stroke-width="1.6" stroke-linecap="round"/><path d="M4.6 3.4V2.2Q4.6 0.9 5.9 0.9H8.7Q10 0.9 10 2.2V3.4" stroke="#000" stroke-width="1.4" fill="none"/><path d="M2.3 4V13Q2.3 15.05 4.3 15.05H10.3Q12.3 15.05 12.3 13V4" stroke="#000" stroke-width="1.5" fill="none"/><path d="M4.56 6.5V12.6M7.28 6.5V12.6M9.8 6.5V12.6" stroke="#000" stroke-width="1.2" stroke-linecap="round"/></svg>
<div class="t" style="left:22.62px;top:1034.91px;font-size:17px;line-height:21px;color:#000;letter-spacing:0.620px;">214</div>
<div class="t" style="left:121.12px;top:1034.91px;font-size:17px;line-height:21px;color:#000;letter-spacing:0.620px;">Lili</div>
<div class="t" style="left:318.75px;top:1034.91px;font-size:17px;line-height:21px;color:#000;letter-spacing:0.620px;">900</div>
<div class="t" style="left:392.88px;top:1034.91px;font-size:17px;line-height:21px;color:#000;letter-spacing:0.620px;">35623</div>
<div class="t" style="left:470.12px;top:1034.91px;font-size:17px;line-height:21px;color:#000;letter-spacing:0.650px;">Colour: Red/white / Desc: viscose elastaine ditsy print / Comp: Viscose:97%, Elastane:3% / Supplier: Spring Shades</div>
<div class="t" style="left:1737.25px;top:1034.91px;font-size:17px;line-height:21px;color:#000;letter-spacing:0.620px;">1.00</div>
<div class="t" style="left:2265.88px;top:1034.91px;font-size:17px;line-height:21px;color:#000;letter-spacing:0.620px;">08/06/2022</div>
<svg class="r" style="left:2457.8px;top:1036px" width="15" height="17" viewBox="0 0 15 17"><path d="M0.6 3.7H14" stroke="#000" stroke-width="1.6" stroke-linecap="round"/><path d="M4.6 3.4V2.2Q4.6 0.9 5.9 0.9H8.7Q10 0.9 10 2.2V3.4" stroke="#000" stroke-width="1.4" fill="none"/><path d="M2.3 4V13Q2.3 15.05 4.3 15.05H10.3Q12.3 15.05 12.3 13V4" stroke="#000" stroke-width="1.5" fill="none"/><path d="M4.56 6.5V12.6M7.28 6.5V12.6M9.8 6.5V12.6" stroke="#000" stroke-width="1.2" stroke-linecap="round"/></svg>
<div class="t" style="left:22.62px;top:1083.91px;font-size:17px;line-height:21px;color:#000;letter-spacing:0.620px;">211</div>
<div class="t" style="left:121.12px;top:1083.91px;font-size:17px;line-height:21px;color:#000;letter-spacing:0.620px;">Lili</div>
<div class="t" style="left:318.88px;top:1083.91px;font-size:17px;line-height:21px;color:#000;letter-spacing:0.620px;">3000</div>
<div class="t" style="left:392.88px;top:1083.91px;font-size:17px;line-height:21px;color:#000;letter-spacing:0.620px;">35618</div>
<div class="t" style="left:470.12px;top:1083.91px;font-size:17px;line-height:21px;color:#000;letter-spacing:0.598px;">Colour: blue ditsy / Desc: viscose elastaine / Comp: Viscose:97%, Elastane:3% / Supplier: Spring Shades</div>
<div class="t" style="left:1737.25px;top:1083.91px;font-size:17px;line-height:21px;color:#000;letter-spacing:0.620px;">1.00</div>
<div class="t" style="left:1812.12px;top:1083.91px;font-size:17px;line-height:21px;color:#000;letter-spacing:0.620px;">EC</div>
<div class="t" style="left:2265.88px;top:1083.91px;font-size:17px;line-height:21px;color:#000;letter-spacing:0.620px;">01/05/2023</div>
<svg class="r" style="left:2457.8px;top:1085px" width="15" height="17" viewBox="0 0 15 17"><path d="M0.6 3.7H14" stroke="#000" stroke-width="1.6" stroke-linecap="round"/><path d="M4.6 3.4V2.2Q4.6 0.9 5.9 0.9H8.7Q10 0.9 10 2.2V3.4" stroke="#000" stroke-width="1.4" fill="none"/><path d="M2.3 4V13Q2.3 15.05 4.3 15.05H10.3Q12.3 15.05 12.3 13V4" stroke="#000" stroke-width="1.5" fill="none"/><path d="M4.56 6.5V12.6M7.28 6.5V12.6M9.8 6.5V12.6" stroke="#000" stroke-width="1.2" stroke-linecap="round"/></svg>
<div class="t" style="left:22.62px;top:1132.91px;font-size:17px;line-height:21px;color:#000;letter-spacing:0.620px;">210</div>
<div class="t" style="left:121.12px;top:1132.91px;font-size:17px;line-height:21px;color:#000;letter-spacing:0.620px;">Lili</div>
<div class="t" style="left:318.62px;top:1132.91px;font-size:17px;line-height:21px;color:#000;letter-spacing:0.620px;">2700</div>
<div class="t" style="left:392.88px;top:1132.91px;font-size:17px;line-height:21px;color:#000;letter-spacing:0.620px;">35476</div>
<div class="t" style="left:470.12px;top:1132.91px;font-size:17px;line-height:21px;color:#000;letter-spacing:0.449px;">Colour: PINK/WHITE / Desc: viscose elastaine DITSY PRINT / Comp: Viscose:97%, Elastane:3% / Supplier: Spring Shades</div>
<div class="t" style="left:1737.25px;top:1132.91px;font-size:17px;line-height:21px;color:#000;letter-spacing:0.620px;">1.00</div>
<div class="t" style="left:1812.12px;top:1132.91px;font-size:17px;line-height:21px;color:#000;letter-spacing:0.620px;">EC</div>
<div class="t" style="left:1887.75px;top:1132.91px;font-size:17px;line-height:21px;color:#000;letter-spacing:0.620px;">97</div>
<div class="t" style="left:2012.75px;top:1132.91px;font-size:17px;line-height:21px;color:#000;letter-spacing:0.620px;">-68-</div>
<div class="t" style="left:2141.62px;top:1132.91px;font-size:17px;line-height:21px;color:#000;letter-spacing:0.620px;">2500.00</div>
<div class="t" style="left:2265.88px;top:1132.91px;font-size:17px;line-height:21px;color:#000;letter-spacing:0.620px;">03/05/2023</div>
<svg class="r" style="left:2457.8px;top:1134px" width="15" height="17" viewBox="0 0 15 17"><path d="M0.6 3.7H14" stroke="#000" stroke-width="1.6" stroke-linecap="round"/><path d="M4.6 3.4V2.2Q4.6 0.9 5.9 0.9H8.7Q10 0.9 10 2.2V3.4" stroke="#000" stroke-width="1.4" fill="none"/><path d="M2.3 4V13Q2.3 15.05 4.3 15.05H10.3Q12.3 15.05 12.3 13V4" stroke="#000" stroke-width="1.5" fill="none"/><path d="M4.56 6.5V12.6M7.28 6.5V12.6M9.8 6.5V12.6" stroke="#000" stroke-width="1.2" stroke-linecap="round"/></svg>
<div class="t" style="left:22.62px;top:1181.91px;font-size:17px;line-height:21px;color:#000;letter-spacing:0.620px;">209</div>
<div class="t" style="left:121.12px;top:1181.91px;font-size:17px;line-height:21px;color:#000;letter-spacing:0.620px;">Lili</div>
<div class="t" style="left:318.25px;top:1181.91px;font-size:17px;line-height:21px;color:#000;letter-spacing:0.620px;">1500</div>
<div class="t" style="left:392.88px;top:1181.91px;font-size:17px;line-height:21px;color:#000;letter-spacing:0.620px;">35616</div>
<div class="t" style="left:470.12px;top:1181.91px;font-size:17px;line-height:21px;color:#000;letter-spacing:0.619px;">Colour: Blue Ditsy / Desc: viscose elastaine ditsy print / Comp: Viscose:97%, Elastane:3% / Supplier: Spring Shades</div>
<div class="t" style="left:1737.25px;top:1181.91px;font-size:17px;line-height:21px;color:#000;letter-spacing:0.620px;">1.00</div>
<div class="t" style="left:1812.12px;top:1181.91px;font-size:17px;line-height:21px;color:#000;letter-spacing:0.620px;">EC</div>
<div class="t" style="left:2265.88px;top:1181.91px;font-size:17px;line-height:21px;color:#000;letter-spacing:0.620px;">01/05/2023</div>
<svg class="r" style="left:2457.8px;top:1183px" width="15" height="17" viewBox="0 0 15 17"><path d="M0.6 3.7H14" stroke="#000" stroke-width="1.6" stroke-linecap="round"/><path d="M4.6 3.4V2.2Q4.6 0.9 5.9 0.9H8.7Q10 0.9 10 2.2V3.4" stroke="#000" stroke-width="1.4" fill="none"/><path d="M2.3 4V13Q2.3 15.05 4.3 15.05H10.3Q12.3 15.05 12.3 13V4" stroke="#000" stroke-width="1.5" fill="none"/><path d="M4.56 6.5V12.6M7.28 6.5V12.6M9.8 6.5V12.6" stroke="#000" stroke-width="1.2" stroke-linecap="round"/></svg>
<div class="t" style="left:22.62px;top:1230.91px;font-size:17px;line-height:21px;color:#000;letter-spacing:0.620px;">228</div>
<div class="t" style="left:121.12px;top:1230.91px;font-size:17px;line-height:21px;color:#000;letter-spacing:0.620px;">Lili</div>
<div class="t" style="left:318.25px;top:1230.91px;font-size:17px;line-height:21px;color:#000;letter-spacing:0.620px;">1200</div>
<div class="t" style="left:392.25px;top:1230.91px;font-size:17px;line-height:21px;color:#000;letter-spacing:0.620px;">10896</div>
<div class="t" style="left:470.12px;top:1230.91px;font-size:17px;line-height:21px;color:#000;letter-spacing:0.665px;">Colour: Brown /Cream / Desc: Animal Print / Comp: Viscose:100% / Supplier: Future Fabrics</div>
<div class="t" style="left:1737.25px;top:1230.91px;font-size:17px;line-height:21px;color:#000;letter-spacing:0.620px;">1.80</div>
<div class="t" style="left:1812.12px;top:1230.91px;font-size:17px;line-height:21px;color:#000;letter-spacing:0.620px;">EC</div>
<div class="t" style="left:1887.25px;top:1230.91px;font-size:17px;line-height:21px;color:#000;letter-spacing:0.620px;">109</div>
<div class="t" style="left:2012.75px;top:1230.91px;font-size:17px;line-height:21px;color:#000;letter-spacing:0.620px;">-67-</div>
<div class="t" style="left:2141.25px;top:1230.91px;font-size:17px;line-height:21px;color:#000;letter-spacing:0.620px;">1200.00</div>
<div class="t" style="left:2265.88px;top:1230.91px;font-size:17px;line-height:21px;color:#000;letter-spacing:0.620px;">03/05/2023</div>
<svg class="r" style="left:2457.8px;top:1232px" width="15" height="17" viewBox="0 0 15 17"><path d="M0.6 3.7H14" stroke="#000" stroke-width="1.6" stroke-linecap="round"/><path d="M4.6 3.4V2.2Q4.6 0.9 5.9 0.9H8.7Q10 0.9 10 2.2V3.4" stroke="#000" stroke-width="1.4" fill="none"/><path d="M2.3 4V13Q2.3 15.05 4.3 15.05H10.3Q12.3 15.05 12.3 13V4" stroke="#000" stroke-width="1.5" fill="none"/><path d="M4.56 6.5V12.6M7.28 6.5V12.6M9.8 6.5V12.6" stroke="#000" stroke-width="1.2" stroke-linecap="round"/></svg>
<div class="t" style="left:22.62px;top:1279.91px;font-size:17px;line-height:21px;color:#000;letter-spacing:0.620px;">229</div>
<div class="t" style="left:121.12px;top:1279.91px;font-size:17px;line-height:21px;color:#000;letter-spacing:0.620px;">Lili</div>
<div class="t" style="left:318.62px;top:1279.91px;font-size:17px;line-height:21px;color:#000;letter-spacing:0.620px;">2000</div>
<div class="t" style="left:393.12px;top:1279.91px;font-size:17px;line-height:21px;color:#000;letter-spacing:0.620px;">4851</div>
<div class="t" style="left:470.12px;top:1279.91px;font-size:17px;line-height:21px;color:#000;letter-spacing:0.681px;">Colour: White 3778 / Desc: 4 Hole Rimmed Button / Comp: Polyester:100% / Supplier: Top Trim</div>
<div class="t" style="left:1737.62px;top:1279.91px;font-size:17px;line-height:21px;color:#000;letter-spacing:0.620px;">26.50</div>
<div class="t" style="left:1812.38px;top:1279.91px;font-size:17px;line-height:21px;color:#000;letter-spacing:0.620px;">non-</div>
<div class="t" style="left:1812.12px;top:1306.91px;font-size:17px;line-height:21px;color:#000;letter-spacing:0.620px;">EC</div>
<div class="t" style="left:1887.25px;top:1279.91px;font-size:17px;line-height:21px;color:#000;letter-spacing:0.620px;">109</div>
<div class="t" style="left:2012.75px;top:1279.91px;font-size:17px;line-height:21px;color:#000;letter-spacing:0.620px;">-67-</div>
<div class="t" style="left:2141.62px;top:1279.91px;font-size:17px;line-height:21px;color:#000;letter-spacing:0.620px;">2000.00</div>
<div class="t" style="left:2265.88px;top:1279.91px;font-size:17px;line-height:21px;color:#000;letter-spacing:0.620px;">02/05/2023</div>
<svg class="r" style="left:2457.8px;top:1281px" width="15" height="17" viewBox="0 0 15 17"><path d="M0.6 3.7H14" stroke="#000" stroke-width="1.6" stroke-linecap="round"/><path d="M4.6 3.4V2.2Q4.6 0.9 5.9 0.9H8.7Q10 0.9 10 2.2V3.4" stroke="#000" stroke-width="1.4" fill="none"/><path d="M2.3 4V13Q2.3 15.05 4.3 15.05H10.3Q12.3 15.05 12.3 13V4" stroke="#000" stroke-width="1.5" fill="none"/><path d="M4.56 6.5V12.6M7.28 6.5V12.6M9.8 6.5V12.6" stroke="#000" stroke-width="1.2" stroke-linecap="round"/></svg>
<div class="t" style="left:22.62px;top:1355.91px;font-size:17px;line-height:21px;color:#000;letter-spacing:0.620px;">230</div>
<div class="t" style="left:121.12px;top:1355.91px;font-size:17px;line-height:21px;color:#000;letter-spacing:0.620px;">Lili</div>
<div class="t" style="left:318.62px;top:1355.91px;font-size:17px;line-height:21px;color:#000;letter-spacing:0.620px;">2000</div>
<div class="t" style="left:392.25px;top:1355.91px;font-size:17px;line-height:21px;color:#000;letter-spacing:0.620px;">12118</div>
<div class="t" style="left:470.12px;top:1355.91px;font-size:17px;line-height:21px;color:#000;letter-spacing:0.659px;">Colour: N/A / Desc: invisible zip / Comp: Polyester:100% / Supplier: Classic Trims</div>
<div class="t" style="left:1737.88px;top:1355.91px;font-size:17px;line-height:21px;color:#000;letter-spacing:0.620px;">0.65</div>
<div class="t" style="left:1812.38px;top:1355.91px;font-size:17px;line-height:21px;color:#000;letter-spacing:0.620px;">non-</div>
<div class="t" style="left:1812.12px;top:1382.91px;font-size:17px;line-height:21px;color:#000;letter-spacing:0.620px;">EC</div>
<div class="t" style="left:1887.25px;top:1355.91px;font-size:17px;line-height:21px;color:#000;letter-spacing:0.620px;">109</div>
<div class="t" style="left:2012.75px;top:1355.91px;font-size:17px;line-height:21px;color:#000;letter-spacing:0.620px;">-67-</div>
<div class="t" style="left:2141.62px;top:1355.91px;font-size:17px;line-height:21px;color:#000;letter-spacing:0.620px;">2000.00</div>
<div class="t" style="left:2265.88px;top:1355.91px;font-size:17px;line-height:21px;color:#000;letter-spacing:0.620px;">03/05/2023</div>
<svg class="r" style="left:2457.8px;top:1356px" width="15" height="17" viewBox="0 0 15 17"><path d="M0.6 3.7H14" stroke="#000" stroke-width="1.6" stroke-linecap="round"/><path d="M4.6 3.4V2.2Q4.6 0.9 5.9 0.9H8.7Q10 0.9 10 2.2V3.4" stroke="#000" stroke-width="1.4" fill="none"/><path d="M2.3 4V13Q2.3 15.05 4.3 15.05H10.3Q12.3 15.05 12.3 13V4" stroke="#000" stroke-width="1.5" fill="none"/><path d="M4.56 6.5V12.6M7.28 6.5V12.6M9.8 6.5V12.6" stroke="#000" stroke-width="1.2" stroke-linecap="round"/></svg>
<svg class="r" style="left:2457.8px;top:1432px" width="15" height="17" viewBox="0 0 15 17"><path d="M0.6 3.7H14" stroke="#000" stroke-width="1.6" stroke-linecap="round"/><path d="M4.6 3.4V2.2Q4.6 0.9 5.9 0.9H8.7Q10 0.9 10 2.2V3.4" stroke="#000" stroke-width="1.4" fill="none"/><path d="M2.3 4V13Q2.3 15.05 4.3 15.05H10.3Q12.3 15.05 12.3 13V4" stroke="#000" stroke-width="1.5" fill="none"/><path d="M4.56 6.5V12.6M7.28 6.5V12.6M9.8 6.5V12.6" stroke="#000" stroke-width="1.2" stroke-linecap="round"/></svg>
<div class="t" style="left:448.75px;top:275.99px;font-size:26px;line-height:32px;color:#5a3ae6;letter-spacing:-0.005px;">Short cut to Purchase Order</div>
<div class="t" style="left:1472.75px;top:275.99px;font-size:26px;line-height:32px;color:#5a3ae6;letter-spacing:0.011px;">Short cut to Production Order Allocations page</div>
<svg class="r" style="left:0;top:0" width="2520" height="1434" viewBox="0 0 2520 1434">
<path d="M607 322.7L77 496.5" stroke="#5a3ae6" stroke-width="3.6"/>
<path d="M63.2 502.4L78.7 487L85 505.8Z" fill="#5a3ae6"/>
<path d="M1738.6 318.5L1886 1111" stroke="#5a3ae6" stroke-width="3.3"/>
<path d="M1890.8 1129.4L1877.8 1112.4L1896.8 1108.7Z" fill="#5a3ae6"/>
</svg>
<div class="r" style="left:2345px;top:1360px;width:144px;height:61px;background:#ef5a32;border-radius:31px;"></div>
<svg class="r" style="left:2373px;top:1376px" width="29" height="29" viewBox="0 0 29 29"><circle cx="14.4" cy="14.3" r="12" stroke="#3a1a10" stroke-width="2.6" fill="none"/><path d="M10.3 11Q10.3 7.2 14.4 7.2Q18.5 7.2 18.5 10.6Q18.5 12.6 16 14Q14.4 15 14.4 17.3" stroke="#3a1a10" stroke-width="2.6" fill="none"/><circle cx="14.4" cy="21.2" r="1.6" fill="#3a1a10"/></svg>
<div class="t" style="left:2410.93px;top:1377.90px;font-size:20.5px;line-height:26px;color:#3a1a10;font-weight:bold;letter-spacing:1.217px;">Help</div>
<svg class="r" style="left:0;top:0" width="60" height="60" viewBox="0 0 60 60"><g fill="#17939d"><circle cx="30.42" cy="24.15" r="2.0"/><circle cx="30.42" cy="34.51" r="2.0"/><circle cx="25.24" cy="29.33" r="2.0"/><circle cx="35.60" cy="29.33" r="2.0"/><circle cx="26.97" cy="20.70" r="1.9"/><circle cx="33.87" cy="37.96" r="1.9"/><circle cx="21.79" cy="25.88" r="1.9"/><circle cx="39.05" cy="32.78" r="1.9"/><circle cx="33.87" cy="20.70" r="1.9"/><circle cx="26.97" cy="37.96" r="1.9"/><circle cx="21.79" cy="32.78" r="1.9"/><circle cx="39.05" cy="25.88" r="1.9"/><circle cx="30.42" cy="17.24" r="1.6"/><circle cx="30.42" cy="41.42" r="1.6"/><circle cx="18.33" cy="29.33" r="1.6"/><circle cx="42.51" cy="29.33" r="1.6"/><circle cx="23.51" cy="17.24" r="1.4"/><circle cx="37.33" cy="41.42" r="1.4"/><circle cx="18.33" cy="22.42" r="1.4"/><circle cx="42.51" cy="36.24" r="1.4"/><circle cx="37.33" cy="17.24" r="1.4"/><circle cx="23.51" cy="41.42" r="1.4"/><circle cx="18.33" cy="36.24" r="1.4"/><circle cx="42.51" cy="22.42" r="1.4"/><circle cx="26.97" cy="13.79" r="1.3"/><circle cx="33.87" cy="44.87" r="1.3"/><circle cx="14.88" cy="25.88" r="1.3"/><circle cx="45.96" cy="32.78" r="1.3"/><circle cx="33.87" cy="13.79" r="1.3"/><circle cx="26.97" cy="44.87" r="1.3"/><circle cx="14.88" cy="32.78" r="1.3"/><circle cx="45.96" cy="25.88" r="1.3"/><circle cx="20.06" cy="13.79" r="0.9"/><circle cx="40.78" cy="44.87" r="0.9"/><circle cx="14.88" cy="18.97" r="0.9"/><circle cx="45.96" cy="39.69" r="0.9"/><circle cx="40.78" cy="13.79" r="0.9"/><circle cx="20.06" cy="44.87" r="0.9"/><circle cx="14.88" cy="39.69" r="0.9"/><circle cx="45.96" cy="18.97" r="0.9"/><circle cx="30.42" cy="10.34" r="0.8"/><circle cx="30.42" cy="48.32" r="0.8"/><circle cx="11.43" cy="29.33" r="0.8"/><circle cx="49.41" cy="29.33" r="0.8"/><circle cx="23.51" cy="10.34" r="0.8"/><circle cx="37.33" cy="48.32" r="0.8"/><circle cx="11.43" cy="22.42" r="0.8"/><circle cx="49.41" cy="36.24" r="0.8"/><circle cx="37.33" cy="10.34" r="0.8"/><circle cx="23.51" cy="48.32" r="0.8"/><circle cx="11.43" cy="36.24" r="0.8"/><circle cx="49.41" cy="22.42" r="0.8"/></g></svg>
<div class="t" style="left:94.70px;top:4.03px;font-size:36px;line-height:45px;color:#000;font-weight:bold;transform:scaleX(1.356);transform-origin:1.00px 0;">a</div>
<div class="t" style="left:121.62px;top:4.03px;font-size:36px;line-height:45px;color:#000;font-weight:bold;transform:scaleX(0.948);transform-origin:1.38px 0;">c</div>
<div class="t" style="left:138.62px;top:4.03px;font-size:36px;line-height:45px;color:#000;font-weight:bold;transform:scaleX(0.971);transform-origin:1.38px 0;">o</div>
<div class="t" style="left:158.62px;top:4.03px;font-size:36px;line-height:45px;color:#000;font-weight:bold;transform:scaleX(0.791);transform-origin:2.38px 0;">r</div>
<div class="t" style="left:170.03px;top:4.03px;font-size:36px;line-height:45px;color:#000;font-weight:bold;transform:scaleX(1.099);transform-origin:1.38px 0;">e</div>
<div class="t" style="left:56.12px;top:4.03px;font-size:36px;line-height:45px;color:#000;font-weight:bold;">n</div>
<div class="t" style="left:124.00px;top:40.74px;font-size:12px;line-height:15px;color:#1a9aa6;letter-spacing:-0.300px;">By</div>
<div class="t" style="left:139.12px;top:40.07px;font-size:12.5px;line-height:16px;color:#000;font-weight:bold;letter-spacing:0.188px;">Fabacus</div>
<svg class="r" style="left:0;top:0" width="160" height="120" viewBox="0 0 160 120"><path d="M91.5 0H150.5L0 107V65Z" fill="#ee5a35"/><text x="0" y="0" transform="translate(24.5 78) rotate(-35.5)" font-family="Liberation Sans" font-size="21.5" letter-spacing="1.1" fill="#fff">Staging</text></svg>
</body></html>
